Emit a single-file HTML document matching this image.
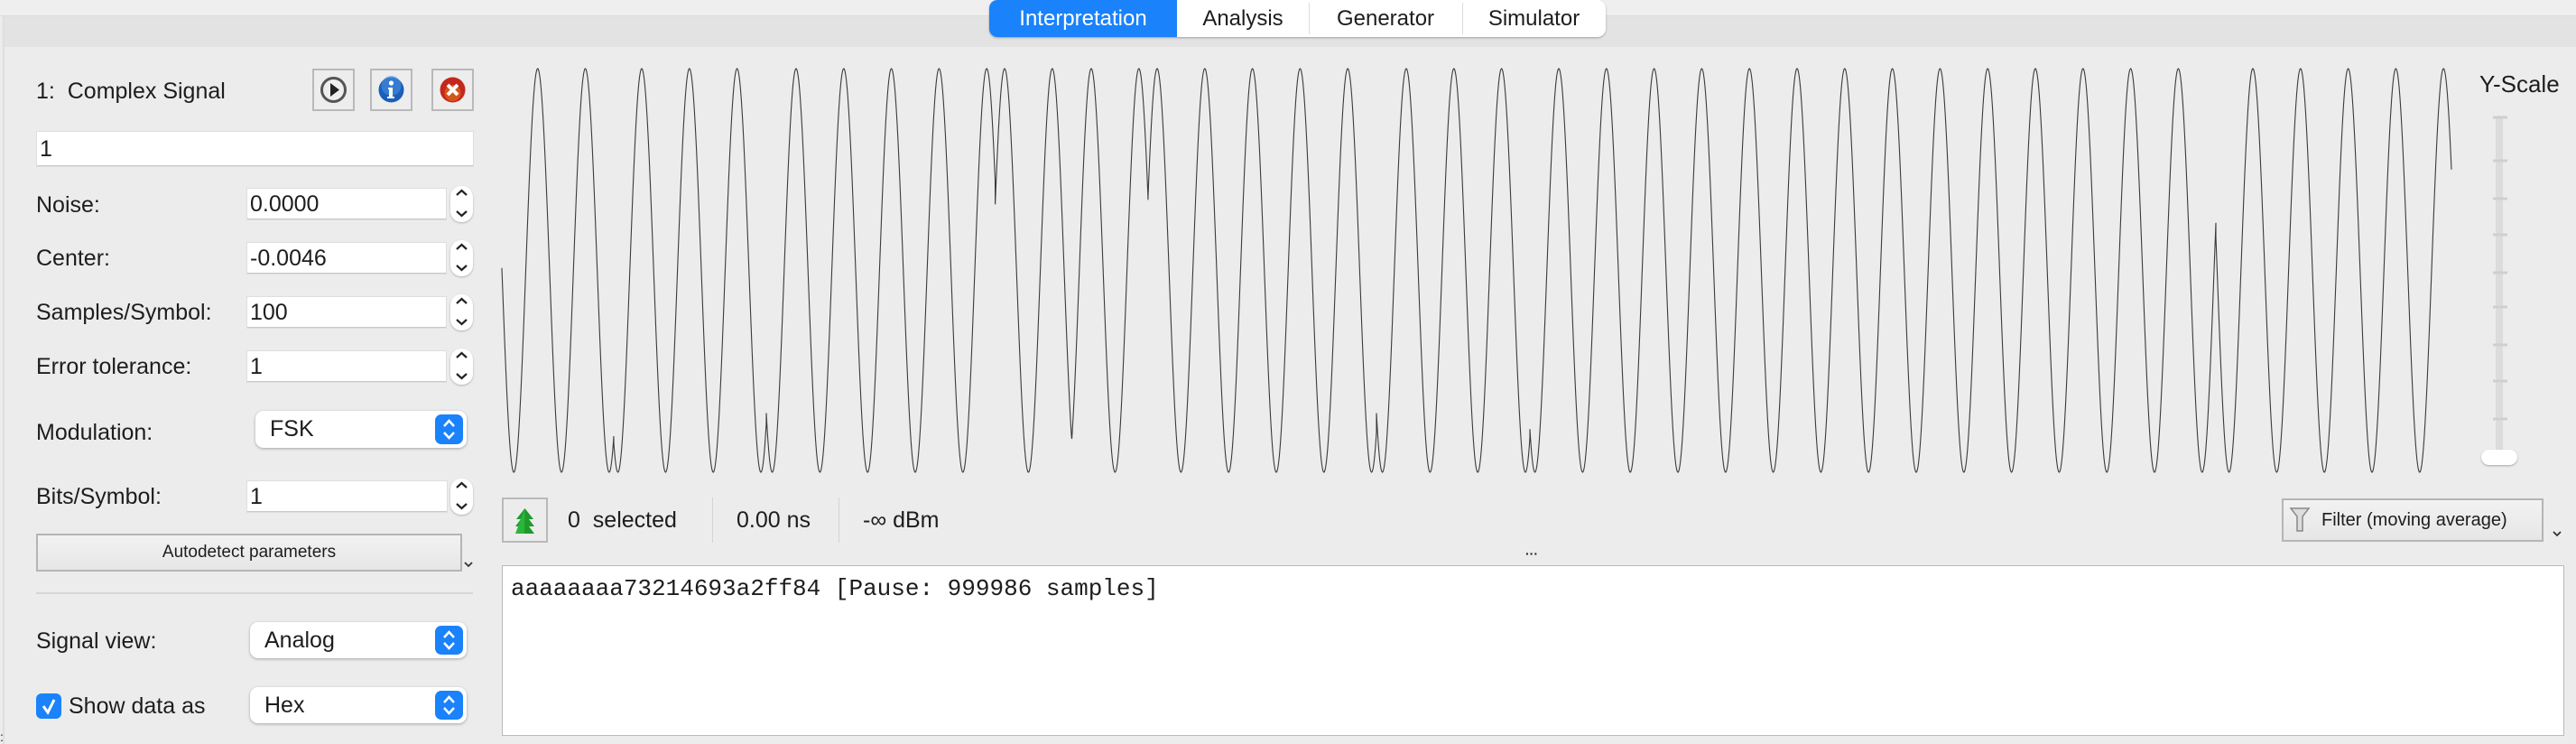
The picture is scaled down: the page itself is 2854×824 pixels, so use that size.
<!DOCTYPE html>
<html><head><meta charset="utf-8"><style>
*{box-sizing:border-box;margin:0;padding:0}
body{width:2854px;height:824px;background:#ececec;font-family:"Liberation Sans",sans-serif;color:#1d1d1d;position:relative;overflow:hidden}
.a{position:absolute}
.lbl{position:absolute;left:40px;font-size:25px;line-height:30px}
.fld{position:absolute;background:#fff;border-bottom:1px solid #c8c8c8;box-shadow:0 0 0 1px #dedede;font-size:25px;line-height:34px;padding-left:3px}
.spin{position:absolute;width:25px;height:40px;background:#fff;border-radius:12px;box-shadow:0 1px 2px rgba(0,0,0,.25)}
.spin svg{position:absolute;left:5px}
.combo{position:absolute;background:#fff;border-radius:9px;box-shadow:0 1px 3px rgba(0,0,0,.3);font-size:25px;padding-left:16px}
.combo .b{position:absolute;right:4px;top:4px;bottom:4px;width:31px;background:#1a82fb;border-radius:7px}
.ib{position:absolute;width:47px;height:47px;border:2px solid #b9b9b9;background:#ededed}
.tab{position:absolute;top:0;height:41px;font-size:24px;line-height:41px;text-align:center}
</style></head><body>
<div class="a" style="left:0;top:0;width:2854px;height:18px;background:#efefef;border-bottom:1px solid #dcdcdc"></div>
<div class="a" style="left:4px;top:18px;width:2850px;height:34px;background:#e3e3e3"></div>
<div class="a" style="left:3px;top:18px;width:2px;height:806px;background:#dedede"></div>
<!-- tabs -->
<div class="a" style="left:1096px;top:0;width:683px;height:41px;background:#fff;border-radius:9px;box-shadow:0 1px 2px rgba(0,0,0,.3)"></div>
<div class="tab" style="left:1096px;width:208px;background:#1a82fb;color:#fff;border-radius:9px 0 0 9px">Interpretation</div>
<div class="tab" style="left:1304px;width:146px">Analysis</div>
<div class="a" style="left:1450px;top:3px;width:1px;height:35px;background:#ddd"></div>
<div class="tab" style="left:1450px;width:170px">Generator</div>
<div class="a" style="left:1620px;top:3px;width:1px;height:35px;background:#ddd"></div>
<div class="tab" style="left:1620px;width:159px">Simulator</div>

<!-- left panel -->
<div class="lbl" style="top:86px">1:&nbsp; Complex Signal</div>
<div class="ib" style="left:346px;top:76px"><svg width="43" height="43" viewBox="0 0 43 43"><circle cx="21.5" cy="21.5" r="13" fill="#eee" stroke="#555" stroke-width="3"/><path d="M18 14 L28 21.5 L18 29Z" fill="#222"/></svg></div>
<div class="ib" style="left:410px;top:76px"><svg width="43" height="43" viewBox="0 0 43 43"><circle cx="21.5" cy="21.5" r="14" fill="#1a5fb8"/><circle cx="21.5" cy="17" r="11" fill="#4a8ee0" opacity=".6"/><circle cx="21.5" cy="14" r="2.6" fill="#fff"/><path d="M18 19h5v10h2v2h-8v-2h2v-8h-1z" fill="#fff"/></svg></div>
<div class="ib" style="left:478px;top:76px"><svg width="43" height="43" viewBox="0 0 43 43"><circle cx="21.5" cy="21.5" r="14" fill="#c4281c"/><circle cx="21.5" cy="25" r="9" fill="#e0741a" opacity=".6"/><path d="M16 16L27 27M27 16L16 27" stroke="#fff" stroke-width="4"/></svg></div>

<div class="fld" style="left:41px;top:146px;width:483px;height:38px;line-height:38px">1</div>

<div class="lbl" style="top:212px">Noise:</div>
<div class="fld" style="left:274px;top:209px;width:220px;height:34px">0.0000</div>
<div class="lbl" style="top:271px">Center:</div>
<div class="fld" style="left:274px;top:269px;width:220px;height:34px">-0.0046</div>
<div class="lbl" style="top:331px">Samples/Symbol:</div>
<div class="fld" style="left:274px;top:329px;width:220px;height:34px">100</div>
<div class="lbl" style="top:391px">Error tolerance:</div>
<div class="fld" style="left:274px;top:389px;width:220px;height:34px">1</div>
<div class="lbl" style="top:464px">Modulation:</div>
<div class="combo" style="left:283px;top:455px;width:234px;height:41px;line-height:41px">FSK<div class="b"><svg width="31" height="33" viewBox="0 0 31 33"><path d="M10 13l5.5-6 5.5 6M10 20l5.5 6 5.5-6" fill="none" stroke="#fff" stroke-width="2.5"/></svg></div></div>
<div class="lbl" style="top:535px">Bits/Symbol:</div>
<div class="fld" style="left:274px;top:533px;width:221px;height:34px">1</div>

<div class="spin" style="left:499px;top:206px"><svg width="15" height="40"><path d="M2 10l5.5-5 5.5 5M2 28l5.5 5 5.5-5" fill="none" stroke="#222" stroke-width="2.2"/></svg></div>
<div class="spin" style="left:499px;top:266px"><svg width="15" height="40"><path d="M2 10l5.5-5 5.5 5M2 28l5.5 5 5.5-5" fill="none" stroke="#222" stroke-width="2.2"/></svg></div>
<div class="spin" style="left:499px;top:326px"><svg width="15" height="40"><path d="M2 10l5.5-5 5.5 5M2 28l5.5 5 5.5-5" fill="none" stroke="#222" stroke-width="2.2"/></svg></div>
<div class="spin" style="left:499px;top:386px"><svg width="15" height="40"><path d="M2 10l5.5-5 5.5 5M2 28l5.5 5 5.5-5" fill="none" stroke="#222" stroke-width="2.2"/></svg></div>
<div class="spin" style="left:499px;top:530px"><svg width="15" height="40"><path d="M2 10l5.5-5 5.5 5M2 28l5.5 5 5.5-5" fill="none" stroke="#222" stroke-width="2.2"/></svg></div>

<div class="a" style="left:40px;top:591px;width:472px;height:42px;border:2px solid #b5b5b5;background:linear-gradient(#f2f2f2,#e6e6e6);font-size:19px;line-height:38px;text-align:center">Autodetect parameters</div>
<svg class="a" style="left:513px;top:620px" width="12" height="10"><path d="M2 3l4 4 4-4" fill="none" stroke="#333" stroke-width="1.8"/></svg>
<div class="a" style="left:40px;top:656px;width:484px;height:2px;background:#d6d6d6"></div>

<div class="lbl" style="top:695px">Signal view:</div>
<div class="combo" style="left:277px;top:689px;width:240px;height:40px;line-height:40px">Analog<div class="b"><svg width="31" height="32" viewBox="0 0 31 32"><path d="M10 13l5.5-6 5.5 6M10 19l5.5 6 5.5-6" fill="none" stroke="#fff" stroke-width="2.5"/></svg></div></div>
<div class="a" style="left:40px;top:768px;width:28px;height:28px;background:#1a82fb;border-radius:6px"><svg width="28" height="28"><path d="M8 14l5 7 7-14" fill="none" stroke="#fff" stroke-width="3"/></svg></div>
<div class="a" style="left:76px;top:767px;font-size:25px;line-height:30px">Show data as</div>
<div class="combo" style="left:277px;top:761px;width:240px;height:40px;line-height:40px">Hex<div class="b"><svg width="31" height="32" viewBox="0 0 31 32"><path d="M10 13l5.5-6 5.5 6M10 19l5.5 6 5.5-6" fill="none" stroke="#fff" stroke-width="2.5"/></svg></div></div>
<div class="a" style="left:0;top:808px;font-size:14px">:</div>

<!-- waveform -->
<svg class="a" style="left:0;top:0" width="2854" height="560"><path id="wave" d="" fill="none" stroke="#3a3a3a" stroke-width="1.1"/></svg>

<!-- Y-scale -->
<div class="a" style="left:2747px;top:78px;font-size:26px">Y-Scale</div>
<div class="a" style="left:2765px;top:128px;width:8px;height:380px;background:#dcdcdc;border-radius:4px"></div>
<svg class="a" style="left:2760px;top:125px" width="20" height="350"><g stroke="#cfcfcf" stroke-width="3"><path d="M2 5h16M2 53h16M2 95h16M2 135h16M2 177h16M2 215h16M2 257h16M2 297h16M2 339h16"/></g></svg>
<div class="a" style="left:2749px;top:498px;width:40px;height:17px;background:#fff;border-radius:9px;box-shadow:0 1px 2px rgba(0,0,0,.3)"></div>

<!-- status bar -->
<div class="a" style="left:556px;top:551px;width:51px;height:50px;border:2px solid #b9b9b9;background:#ececec"><svg width="47" height="46" viewBox="0 0 47 46"><path d="M23.5 10L14 22h5l-6 8h6l-6 8h21l-6-8h6l-6-8h5z" fill="#1e9a2a"/><path d="M23.5 10L19 22l-6 16h10z" fill="#2bb53a"/></svg></div>
<div class="a" style="left:629px;top:562px;font-size:25px">0&nbsp; selected</div>
<div class="a" style="left:789px;top:551px;width:1px;height:50px;background:#d4d4d4"></div>
<div class="a" style="left:816px;top:562px;font-size:25px">0.00 ns</div>
<div class="a" style="left:929px;top:551px;width:1px;height:50px;background:#d4d4d4"></div>
<div class="a" style="left:956px;top:562px;font-size:25px">-∞ dBm</div>

<div class="a" style="left:2528px;top:552px;width:290px;height:48px;border:2px solid #b5b5b5;background:linear-gradient(#f2f2f2,#e6e6e6);font-size:20px;line-height:44px;padding-left:42px">Filter (moving average)</div>
<svg class="a" style="left:2536px;top:560px" width="26" height="32"><path d="M2 3h20l-7 9v16h-6V12z" fill="#ddd" stroke="#888" stroke-width="1.5"/></svg>
<svg class="a" style="left:2827px;top:586px" width="12" height="10"><path d="M2 3l4 4 4-4" fill="none" stroke="#333" stroke-width="1.8"/></svg>
<div class="a" style="left:1690px;top:608px;font-size:14px;line-height:10px;font-weight:bold">···</div>

<div class="a" style="left:556px;top:626px;width:2285px;height:189px;background:#fff;border:1px solid #b9b9b9;font-family:'Liberation Mono',monospace;font-size:26px;padding:10px 0 0 9px">aaaaaaaa73214693a2ff84 [Pause: 999986 samples]</div>

<script>
(function(){
var T=52.8,mid=299.5,A=223.5;
var segs=[[556,595.7],[680,711],[849,882],[1102.6,1113],[1187.5,1209],[1272,1282],[1525,1558],[1695,1727],[2455,2496],[2716,0]];
var d='';
for(var i=0;i<segs.length-1;i++){
 var s=segs[i][0],e=segs[i+1][0],p=segs[i][1];
 for(var x=s;x<=e;x+=0.5){
  var y=mid-A*Math.cos(2*Math.PI*(x-p)/T);
  d+=(d===''?'M':'L')+x.toFixed(1)+' '+y.toFixed(1);
 }
}
document.getElementById('wave').setAttribute('d',d);
})();
</script>
</body></html>
